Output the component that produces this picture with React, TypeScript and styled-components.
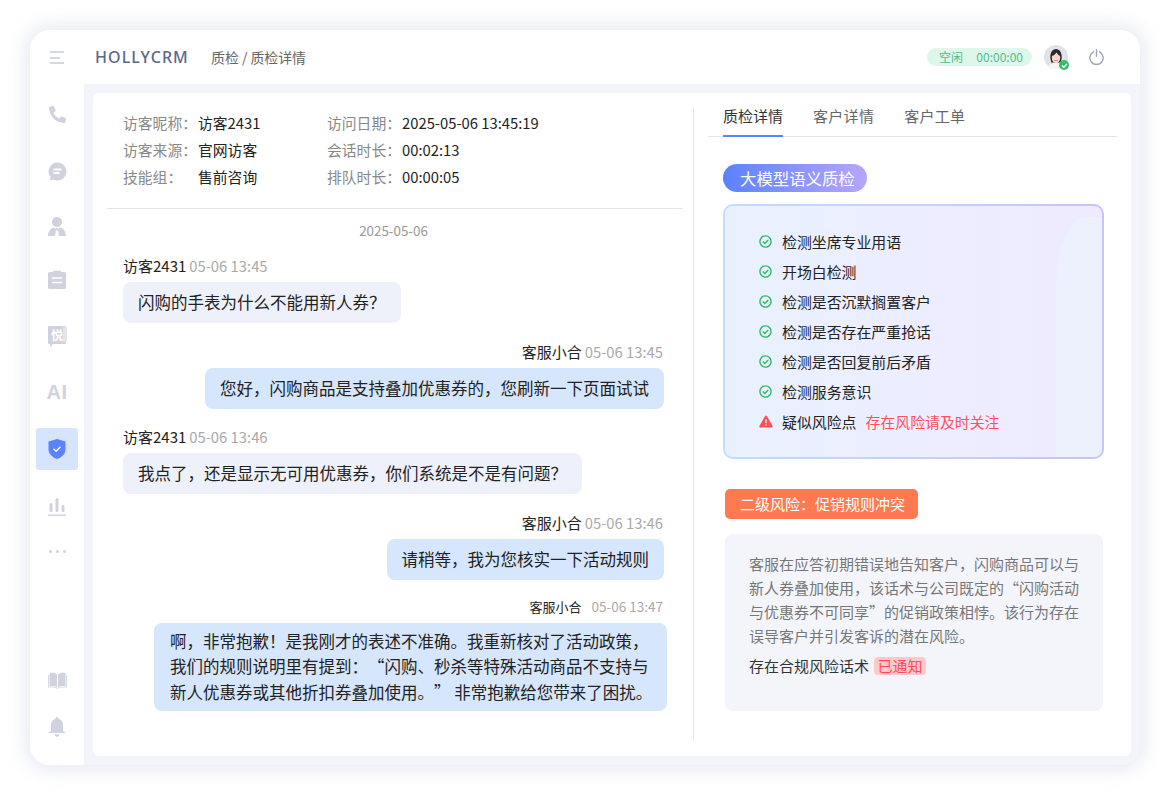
import React from "react";
import styled, { createGlobalStyle } from "styled-components";
import { FaPhoneAlt } from "react-icons/fa";

const Global = createGlobalStyle`
  html, body { margin: 0; padding: 0; background: #fff; }
  body { font-family: "Noto Sans CJK SC", "Noto Sans", sans-serif; color: #222; }
  * { box-sizing: border-box; }
`;

const Page = styled.div`
  width: 1170px; height: 795px; padding: 30px; overflow: hidden; background: #fff;
`;
const Shell = styled.div`
  width: 1110px; height: 735px; display: flex; background: #fff; border-radius: 20px; overflow: hidden;
`;
const ShellGlow = styled.div`
  width: 1110px; height: 735px; border-radius: 20px;
  box-shadow: 0 0 18px 6px rgba(225,228,240,.7);
`;
const Sidebar = styled.aside`
  width: 54px; flex: none; display: flex; flex-direction: column; align-items: center; padding: 21px 0 17px; background: #fff;
`;
const Burger = styled.div`
  width: 14px; height: 13px; margin-bottom: 29px; margin-left: -1px; display: flex; flex-direction: column; justify-content: space-between;
  span { display: block; height: 2px; background: #d5d8e2; }
  span:nth-child(2) { width: 10px; }
`;
const Slot = styled.div<{ $gap?: number; $active?: boolean }>`
  width: 42px; height: 42px; flex: none; margin-top: ${p => p.$gap ?? 0}px; display: flex; align-items: center; justify-content: center;
  border-radius: 3px; color: #d0d3de; background: ${p => (p.$active ? "#d6e4ff" : "transparent")};
`;
const DotSlot = styled(Slot)`
  height: 14px;
  i { width: 3px; height: 3px; margin: 0 2px; border-radius: 50%; background: #d0d3de; }
`;
const SidebarBottom = styled.div`
  margin-top: auto; display: flex; flex-direction: column;
`;
const AiMark = styled.span`
  font: 700 20px/1 "Liberation Sans", sans-serif; color: #d0d3de; letter-spacing: .5px;
`;
const YueTile = styled.div`
  position: relative; width: 18px; height: 18px; background: #d0d3de; color: #fff; font-size: 12px; font-weight: 700; line-height: 18px; text-align: center; border-radius: 1px;
  &::before { content: ""; position: absolute; left: 15px; top: 1px; width: 4px; height: 15px; background: #e4e5ec; transform: skewY(-10deg); }
  &::after { content: ""; position: absolute; left: 2px; bottom: -3px; border-left: 3px solid #d0d3de; border-bottom: 3px solid transparent; }
`;
const Main = styled.div`
  flex: 1; min-width: 0; display: flex; flex-direction: column;
`;
const TopBar = styled.header`
  height: 54px; flex: none; display: flex; align-items: center; padding: 0 36px 0 11px;
`;
const Brand = styled.div`
  font: 500 16px/1 "Noto Sans", sans-serif; color: #5a6888; letter-spacing: 1.1px; width: 116px;
`;
const Crumb = styled.div`
  font-size: 13.9px; color: #666;
`;
const TopRight = styled.div`
  margin-left: auto; display: flex; align-items: center;
`;
const Status = styled.div`
  width: 105px; height: 18px; border-radius: 9px; background: #dff7ea; color: #56b98b; font-size: 12px; line-height: 18px; display: flex; justify-content: space-between; padding: 0 9px 0 12px;
`;
const AvatarWrap = styled.div`
  position: relative; width: 24px; height: 24px; margin-left: 12px;
`;
const Badge = styled.div`
  position: absolute; right: -1px; bottom: -1px; width: 10px; height: 10px; border-radius: 50%; background: #35bd68; display: flex; align-items: center; justify-content: center;
`;
const PowerBtn = styled.div`
  margin-left: 21px; width: 15px; height: 16px; color: #9aa5bd; display: flex;
`;
const Content = styled.div`
  flex: 1; background: #f4f5fb; padding: 9px; min-height: 0;
`;
const Card = styled.div`
  height: 100%; background: #fff; border-radius: 6px; display: flex; padding: 16px 0 15px;
`;
const LeftPane = styled.section`
  width: 601px; flex: none; border-right: 1px solid #e4e6ee; padding: 0 11px 0 14px; display: flex; flex-direction: column;
`;
const Info = styled.div`
  display: grid; grid-template-columns: 204px 1fr; padding: 0 0 18px 16px; border-bottom: 1px solid #e2e5ef; margin-bottom: 11px;
`;
const InfoRow = styled.div`
  display: flex; height: 27px; align-items: center; line-height: 27px; font-size: 14.8px;
`;
const InfoLabel = styled.span`
  width: 75px; flex: none; color: #888;
`;
const InfoValue = styled.span`
  color: #222;
`;
const DateLine = styled.div`
  text-align: center; font-size: 13.4px; line-height: 20px; color: #999; margin: 0 2px 16px 0;
`;
const Msg = styled.div<{ $right?: boolean; $last?: boolean }>`
  display: flex; flex-direction: column; align-items: ${p => (p.$right ? "flex-end" : "flex-start")};
  padding: 0 ${p => (p.$last ? "15px" : "18px")} 0 16px; margin: ${p => (p.$last ? "-2px" : "0")} 0 18.5px;
`;
const Head = styled.div<{ $small?: boolean; $offset?: boolean }>`
  font-size: ${p => (p.$small ? "13px" : "15px")}; line-height: 20px; color: #222; margin-bottom: 6px; margin-right: ${p => (p.$offset ? "4px" : "1px")};
  span { color: #aaa; margin-left: ${p => (p.$small ? "10px" : "3px")}; font-size: ${p => (p.$small ? "13.5px" : "14.8px")}; }
`;
const Bubble = styled.div<{ $agent?: boolean }>`
  padding: 7px 15px; font-size: 16.5px; line-height: 27px; color: #222; border-radius: 8px; background: ${p => (p.$agent ? "#d6e6fc" : "#eef1fa")};
`;
const LongBubble = styled(Bubble)`
  line-height: 25.5px; padding: 0 15px 0 16px; height: 88px; display: flex; flex-direction: column; justify-content: center; width: 513px; white-space: pre; text-spacing-trim: space-all;
`;
const RightPane = styled.section`
  flex: 1; min-width: 0; padding-right: 14px;
`;
const Tabs = styled.nav`
  display: flex; gap: 30px; height: 28px; margin-left: 14px; padding-left: 15px; border-bottom: 1px solid #e2e5ef; position: relative;
`;
const Tab = styled.div<{ $active?: boolean }>`
  height: 28px; font-size: 15px; line-height: 14px; color: ${p => (p.$active ? "#333" : "#666")};
  border-bottom: 2px solid ${p => (p.$active ? "#5b82ff" : "transparent")}; letter-spacing: ${p => (p.$active ? "0" : ".3px")};
`;
const RightBody = styled.div`
  padding: 27px 0 0 29px;
`;
const Pill = styled.div`
  width: 144px; height: 28px; border-radius: 14px; background: linear-gradient(90deg, #5b82ff, #b7a6fb); color: #fff; font-size: 16.4px; line-height: 28px; padding-left: 17px; margin-bottom: 12px;
`;
const CheckBox = styled.div`
  position: relative; width: 381px; height: 255px; padding: 20px 0 0 34px; border: 2px solid transparent; border-radius: 10px; overflow: hidden;
  background: linear-gradient(90deg, #e9f1ff, #efeaff) padding-box, linear-gradient(90deg, #c3dcff, #c9c2fb) border-box;
  &::after {
    content: ""; position: absolute; right: 0; top: 11px; bottom: 0; width: 46px; border-radius: 30px 0 0 0 / 70px 0 0 0;
    background: radial-gradient(rgba(255,255,255,.45) .6px, transparent .8px) 0 0 / 2px 2px, rgba(226,238,250,.55);
  }
`;
const CheckRow = styled.div`
  position: relative; z-index: 1; height: 30px; display: flex; align-items: center; font-size: 14.9px; color: #222;
  svg { flex: none; margin-right: 10px; }
`;
const Warn = styled.span`
  color: #ff5159; margin-left: 9px;
`;
const RiskTag = styled.div`
  width: 193px; height: 30px; margin: 30px 0 15px 2px; border-radius: 5px; background: #ff7a50; color: #fff; font-size: 15px; line-height: 30px; padding-left: 15px;
`;
const Detail = styled.div`
  width: 378px; height: 177px; margin-left: 2px; padding: 18px 0 0 24px; background: #f4f5fb; border-radius: 8px;
`;
const DetailText = styled.p`
  margin: 0 0 6px; font-size: 15px; line-height: 24px; color: #777; white-space: nowrap;
`;
const DetailNote = styled.div`
  display: flex; align-items: center; font-size: 15px; line-height: 24px; color: #333;
`;
const Notified = styled.span`
  margin-left: 5px; height: 18px; line-height: 18px; padding: 0 3.5px; border-radius: 4px; background: #ffc9cc; color: #ff4d55;
`;

const SvgIcon = styled.svg`
  display: block; fill: currentColor;
`;

const Check = () => (
  <svg width="13" height="13" viewBox="0 0 13 13" fill="none">
    <circle cx="6.5" cy="6.5" r="5.6" stroke="#2fbb63" strokeWidth="1.4" />
    <path d="M3.8 6.600l2 2 3.400-3.600" stroke="#2fbb63" strokeWidth="1.4" />
  </svg>
);

const msgs = [
  { name: "访客2431", time: "05-06 13:45", text: "闪购的手表为什么不能用新人券？" },
  { name: "客服小合", time: "05-06 13:45", text: "您好，闪购商品是支持叠加优惠券的，您刷新一下页面试试", right: true },
  { name: "访客2431", time: "05-06 13:46", text: "我点了，还是显示无可用优惠券，你们系统是不是有问题？" },
  { name: "客服小合", time: "05-06 13:46", text: "请稍等，我为您核实一下活动规则", right: true },
];

const info = [
  ["访客昵称：", "访客2431", "访问日期：", "2025-05-06 13:45:19"],
  ["访客来源：", "官网访客", "会话时长：", "00:02:13"],
  ["技能组：", "售前咨询", "排队时长：", "00:00:05"],
];

const checks = ["检测坐席专业用语", "开场白检测", "检测是否沉默搁置客户", "检测是否存在严重抢话", "检测是否回复前后矛盾", "检测服务意识"];

export default function App() {
  return (
    <Page>
      <Global />
      <ShellGlow>
        <Shell>
          <Sidebar>
            <Burger><span /><span /><span /></Burger>
            <Slot><FaPhoneAlt size={17} /></Slot>
            <Slot $gap={15}>
              <SvgIcon width="19" height="19" viewBox="0 0 19 19">
                <path d="M9.500.5a9 9 0 1 1-4.200 17l-3.600 1 .9-3.400A9 9 0 0 1 9.500.5z" />
                <path d="M5.500 7.500h8M5.500 11h6" stroke="#fff" strokeWidth="1.800" />
              </SvgIcon>
            </Slot>
            <Slot $gap={13}>
              <SvgIcon width="18" height="19" viewBox="0 0 18 19">
                <circle cx="9" cy="5" r="5" />
                <path d="M0 19c0-5 3-8 6.500-8.500L8 13l-1 6zM18 19c0-5-3-8-6.500-8.500L10 13l1 6zM8 11h2l.500 1.500L9 14l-1.500-1.500z" />
              </SvgIcon>
            </Slot>
            <Slot $gap={11}>
              <SvgIcon width="18" height="19" viewBox="0 0 18 19">
                <path d="M1.500 2H5V.8h8V2h3.500A1.500 1.500 0 0 1 18 3.500v14a1.500 1.500 0 0 1-1.500 1.500h-15A1.500 1.500 0 0 1 0 17.500v-14A1.500 1.500 0 0 1 1.500 2z" />
                <path d="M4 8h10M4 12.500h10" stroke="#fff" strokeWidth="1.600" />
              </SvgIcon>
            </Slot>
            <Slot $gap={14}><YueTile>悦</YueTile></Slot>
            <Slot $gap={15}><AiMark>AI</AiMark></Slot>
            <Slot $gap={15} $active>
              <svg width="18" height="20" viewBox="0 0 18 20">
                <path d="M9 0l8.500 2.500V10c0 5-3.500 8.200-8.500 10C4 18.200.5 15 .5 10V2.500z" fill="#5b82ff" />
                <path d="M5.500 9.800l2.600 2.500 4.400-4.500" fill="none" stroke="#fff" strokeWidth="1.300" />
              </svg>
            </Slot>
            <Slot $gap={16}>
              <SvgIcon width="18" height="18" viewBox="0 0 18 18">
                <rect x="1.500" y="5" width="3" height="9" rx="1.500" />
                <rect x="7.500" y="0" width="3" height="14" rx="1.500" />
                <rect x="13.500" y="7" width="3" height="7" rx="1.500" />
                <rect x="0" y="16.500" width="18" height="1.500" />
              </SvgIcon>
            </Slot>
            <DotSlot $gap={16}><i /><i /><i /></DotSlot>
            <SidebarBottom>
              <Slot>
                <SvgIcon width="19" height="17" viewBox="0 0 19 17">
                  <path d="M1.500 1C4 .5 7 .7 9 2.200v13.300C7 14 4 13.800 1.500 14.300z" />
                  <path d="M17.500 1C15 .5 12 .7 10 2.200v13.300c2-1.500 5-1.700 7.500-1.200z" />
                  <path d="M.5 3v12.300c3-.6 6-.5 9 1 3-1.500 6-1.600 9-1V3" fill="none" stroke="currentColor" strokeWidth=".8" />
                </SvgIcon>
              </Slot>
              <Slot $gap={5}>
                <SvgIcon width="18" height="20" viewBox="0 0 18 20">
                  <path d="M9 0c1 0 1.500.8 1.500 1.700C13.500 2.500 15 5 15 8v6l2.500 1.500v.5H.5v-.5L3 14V8c0-3 1.500-5.500 4.500-6.300C7.500.8 8 0 9 0z" />
                  <path d="M6.500 17.200h5C11 19 10 19.800 9 19.800s-2-.8-2.500-2.600z" />
                </SvgIcon>
              </Slot>
            </SidebarBottom>
          </Sidebar>
          <Main>
            <TopBar>
              <Brand>HOLLYCRM</Brand>
              <Crumb>质检 / 质检详情</Crumb>
              <TopRight>
                <Status><span>空闲</span><span>00:00:00</span></Status>
                <AvatarWrap>
                  <svg width="24" height="24" viewBox="0 0 24 24">
                    <circle cx="12" cy="12" r="12" fill="#e0e2e8" />
                    <path d="M4 22c1.500-3 4.500-4 8-4s6.500 1 8 4a12 12 0 0 1-16 0z" fill="#f6f6f8" />
                    <path d="M6.300 13c-.3-5.500 2.200-9 5.700-9s6 3.500 5.700 9l-1 4.500H7.300z" fill="#2d2a2e" />
                    <ellipse cx="12" cy="12.500" rx="4.200" ry="5.800" fill="#f3d6c8" />
                    <path d="M7.500 11c2.500-.5 4-2 5-3.500 1 1.800 2 3 4 3.500L16 6 12 4.800 8 6z" fill="#2d2a2e" />
                    <path d="M10.500 15.500h3" stroke="#c8796f" strokeWidth=".8" />
                  </svg>
                  <Badge>
                    <svg width="7" height="7" viewBox="0 0 7 7" fill="none"><path d="M1 3.500l1.800 1.800L6 2" stroke="#fff" strokeWidth="1.300" /></svg>
                  </Badge>
                </AvatarWrap>
                <PowerBtn>
                  <svg width="15" height="16" viewBox="0 0 15 16" fill="none" stroke="currentColor" strokeWidth="1.400" strokeLinecap="round">
                    <path d="M4.500 2.800a6.700 6.700 0 1 0 6 0" />
                    <path d="M7.500.8v6.500" />
                  </svg>
                </PowerBtn>
              </TopRight>
            </TopBar>
            <Content>
              <Card>
                <LeftPane>
                  <Info>
                    {info.map(r => (
                      <React.Fragment key={r[0]}>
                        <InfoRow><InfoLabel>{r[0]}</InfoLabel><InfoValue>{r[1]}</InfoValue></InfoRow>
                        <InfoRow><InfoLabel>{r[2]}</InfoLabel><InfoValue>{r[3]}</InfoValue></InfoRow>
                      </React.Fragment>
                    ))}
                  </Info>
                  <DateLine>2025-05-06</DateLine>
                  {msgs.map(m => (
                    <Msg key={m.text} $right={m.right}>
                      <Head>{m.name}<span>{m.time}</span></Head>
                      <Bubble $agent={m.right}>{m.text}</Bubble>
                    </Msg>
                  ))}
                  <Msg $right $last>
                    <Head $small $offset>客服小合<span>05-06 13:47</span></Head>
                    <LongBubble $agent>
                      <div>啊，非常抱歉！是我刚才的表述不准确。我重新核对了活动政策，</div>
                      <div>我们的规则说明里有提到：“闪购、秒杀等特殊活动商品不支持与</div>
                      <div>新人优惠券或其他折扣券叠加使用。” 非常抱歉给您带来了困扰。</div>
                    </LongBubble>
                  </Msg>
                </LeftPane>
                <RightPane>
                  <Tabs>
                    <Tab $active>质检详情</Tab>
                    <Tab>客户详情</Tab>
                    <Tab>客户工单</Tab>
                  </Tabs>
                  <RightBody>
                    <Pill>大模型语义质检</Pill>
                    <CheckBox>
                      {checks.map(c => (
                        <CheckRow key={c}><Check />{c}</CheckRow>
                      ))}
                      <CheckRow>
                        <svg width="14" height="13" viewBox="0 0 14 13" style={{ marginRight: 9 }}>
                          <path d="M7 .5c.4 0 .7.2.9.5l5.700 10c.3.6-.1 1.500-.9 1.500H1.300c-.8 0-1.200-.9-.9-1.500L6.100 1c.2-.3.5-.5.9-.5z" fill="#ff4d55" />
                          <path d="M7 4.200v4M7 9.500v1.300" stroke="#fff" strokeWidth="1.300" />
                        </svg>
                        疑似风险点<Warn>存在风险请及时关注</Warn>
                      </CheckRow>
                    </CheckBox>
                    <RiskTag>二级风险：促销规则冲突</RiskTag>
                    <Detail>
                      <DetailText>
                        客服在应答初期错误地告知客户，闪购商品可以与<br />
                        新人券叠加使用，该话术与公司既定的“闪购活动<br />
                        与优惠券不可同享”的促销政策相悖。该行为存在<br />
                        误导客户并引发客诉的潜在风险。
                      </DetailText>
                      <DetailNote>存在合规风险话术<Notified>已通知</Notified></DetailNote>
                    </Detail>
                  </RightBody>
                </RightPane>
              </Card>
            </Content>
          </Main>
        </Shell>
      </ShellGlow>
    </Page>
  );
}
